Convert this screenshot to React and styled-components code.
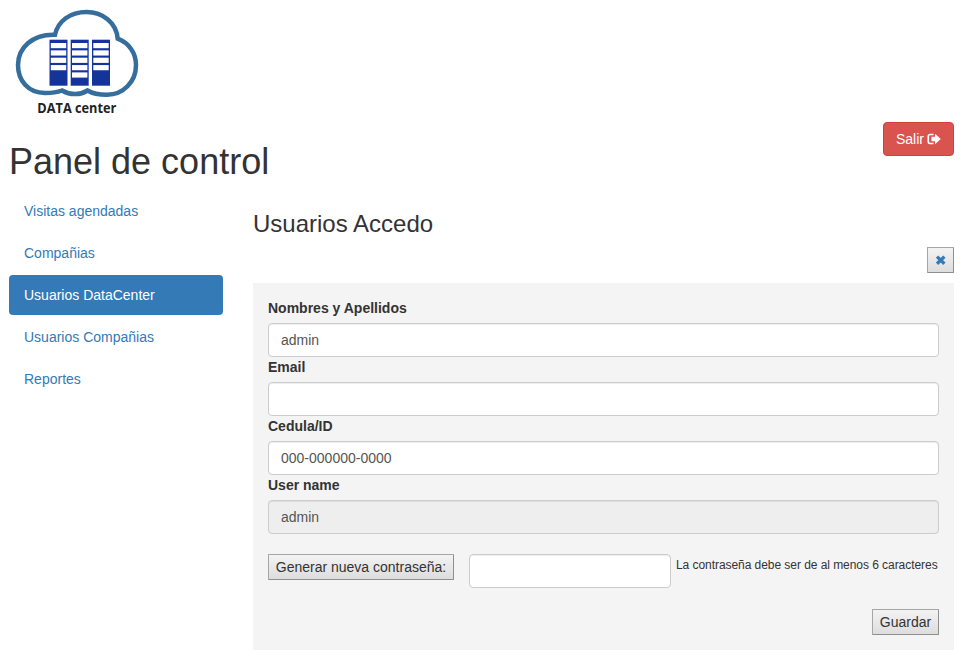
import React from "react";
import styled, { createGlobalStyle, css } from "styled-components";

const GlobalStyle = createGlobalStyle`
  *, *::before, *::after { box-sizing: border-box; }
  body {
    margin: 0;
    background: #fff;
    color: #333;
    font: 14px/20px "Liberation Sans", Arial, sans-serif;
  }
`;

const Page = styled.div`
  height: 662px;
  padding: 0 20px 0 9px;
  overflow: hidden;
`;

const Header = styled.header`
  display: flex;
  justify-content: space-between;
  align-items: flex-end;
  height: 191px;
`;

const Brand = styled.div`
  display: flex;
  flex-direction: column;
  height: 191px;
`;

const LogoArt = styled.svg`
  display: block;
  width: 140px;
  height: 122px;
  flex: none;
`;

const LogoText = styled.text`
  font: 700 13.5px "Open Sans", "Noto Sans", sans-serif;
  fill: #222;
`;

const Title = styled.h1`
  margin: 20px 0 0;
  font-size: 36px;
  font-weight: 400;
  line-height: 39.6px;
  white-space: nowrap;
`;

const ExitButton = styled.button`
  display: flex;
  align-items: center;
  justify-content: center;
  gap: 3px;
  width: 71px;
  height: 34px;
  margin-bottom: 35px;
  padding: 0;
  border: 1px solid #d43f3a;
  border-radius: 4px;
  background: #d9534f;
  color: #fff;
  font: inherit;
`;

const Glyph = styled.svg`
  display: block;
  flex: none;
`;

const Columns = styled.div`
  display: grid;
  grid-template-columns: 214px 701px;
  column-gap: 30px;
`;

const Nav = styled.nav`
  display: flex;
  flex-direction: column;
  gap: 2px;
`;

const NavLink = styled.a`
  height: 40px;
  padding: 10px 15px;
  border-radius: 4px;
  color: ${(p) => (p.$active ? "#fff" : "#337ab7")};
  background: ${(p) => (p.$active ? "#337ab7" : "transparent")};
  text-decoration: none;
`;

const Main = styled.main`
  display: flex;
  flex-direction: column;
`;

const Subtitle = styled.h3`
  height: 26px;
  margin: 20px 0 10px;
  font-size: 24px;
  font-weight: 400;
  line-height: 26.4px;
`;

const PlainButton = styled.button`
  display: flex;
  align-items: center;
  justify-content: center;
  width: ${(p) => p.$width}px;
  height: 26px;
  padding: 0;
  border: 1px solid #a6a6a6;
  border-right-color: #8f8f8f;
  border-bottom-color: #8f8f8f;
  border-radius: 1px;
  background: linear-gradient(#f3f3f3, #dddddd);
  color: #333;
  font: inherit;
  white-space: nowrap;
  flex: none;
`;

const ActionRow = styled.div`
  display: flex;
  justify-content: flex-end;
`;

const FormPanel = styled.form`
  height: 367px;
  margin-top: 10px;
  padding: 15px;
  background: #f4f4f4;
`;

const Field = styled.div`
  display: flex;
  flex-direction: column;
  gap: 5px;
`;

const Label = styled.label`
  font-weight: 700;
  line-height: 20px;
`;

const Input = styled.input`
  display: block;
  width: ${(p) => (p.$width ? `${p.$width}px` : "100%")};
  height: 34px;
  padding: 6px 12px;
  border: 1px solid #ccc;
  border-radius: 4px;
  background: #fff;
  color: #555;
  font: inherit;
  outline: 0;
  box-shadow: inset 0 1px 1px rgba(0, 0, 0, 0.075);
  ${(p) =>
    p.readOnly &&
    css`
      background: #eee;
    `}
`;

const PasswordRow = styled.div`
  display: flex;
  align-items: flex-start;
  height: 34px;
  margin: 20px 0 21px;
`;

const PasswordBox = styled.div`
  margin: 0 5px 0 15px;
`;

const Hint = styled.small`
  padding-top: 1px;
  font-size: 12px;
  line-height: 20px;
  letter-spacing: -0.055px;
  white-space: nowrap;
`;

const RACKS = [
  { x: 49.5, slots: 4 },
  { x: 70.7, slots: 5 },
  { x: 92, slots: 4 },
];

function Logo() {
  return (
    <LogoArt viewBox="9 0 140 122" role="img" aria-label="DATA center">
      <path
        d="M55 34.700C58 21 70 12 86.500 12c16.500 0 30 11 31.200 26.700C129 43 136 53 136 65c0 17-13 29.800-29 29.800-8 0-14-1-19.500-4.300-7 4.500-17 5-25.500 0-4 1.500-9 2.500-17 2.500C28 93 18 80.500 18 65c0-17 14-31 37-30.300Z"
        fill="none"
        stroke="#356d9d"
        strokeWidth="4.500"
      />
      {RACKS.map(({ x, slots }) => (
        <g key={x}>
          <rect x={x} y="39.700" width="18" height="46" fill="#15349a" />
          {Array.from({ length: slots }, (_, i) => (
            <rect key={i} x={x + 1.3} y={43 + i * 7.35} width="15.400" height="5.200" fill="#fff" />
          ))}
        </g>
      ))}
      <LogoText x="37.300" y="112.600" textLength="79" lengthAdjust="spacingAndGlyphs">
        DATA center
      </LogoText>
    </LogoArt>
  );
}

function ExitIcon() {
  return (
    <Glyph width="14" height="14" viewBox="0 0 14 14">
      <path d="M6.500 2.500H3Q1.300 2.500 1.300 4.200v5.600q0 1.700 1.700 1.700h3.500" fill="none" stroke="#fff" strokeWidth="1.600" />
      <path d="M8 1.700v3H4.500v4.600H8v3L13.800 7Z" fill="#fff" />
    </Glyph>
  );
}

function CloseIcon() {
  return (
    <Glyph width="12" height="12" viewBox="0 0 12 12">
      <path d="M2 2.600 9.400 9.800M9.400 2.600 2 9.800" stroke="#337ab7" strokeWidth="3.300" />
    </Glyph>
  );
}

const LINKS = ["Visitas agendadas", "Compañias", "Usuarios DataCenter", "Usuarios Compañias", "Reportes"];

const FIELDS = [
  { id: "nombre", label: "Nombres y Apellidos", value: "admin" },
  { id: "email", label: "Email", value: "" },
  { id: "cedula", label: "Cedula/ID", value: "000-000000-0000" },
  { id: "usuario", label: "User name", value: "admin", readOnly: true },
];

export default function App() {
  return (
    <>
      <GlobalStyle />
      <Page>
        <Header>
          <Brand>
            <Logo />
            <Title>Panel de control</Title>
          </Brand>
          <ExitButton type="button">
            Salir
            <ExitIcon />
          </ExitButton>
        </Header>
        <Columns>
          <Nav>
            {LINKS.map((text) => (
              <NavLink key={text} href="#" $active={text === "Usuarios DataCenter"}>
                {text}
              </NavLink>
            ))}
          </Nav>
          <Main>
            <Subtitle>Usuarios Accedo</Subtitle>
            <ActionRow>
              <PlainButton type="button" $width={27} aria-label="Cerrar">
                <CloseIcon />
              </PlainButton>
            </ActionRow>
            <FormPanel>
              {FIELDS.map(({ id, label, value, readOnly }) => (
                <Field key={id}>
                  <Label htmlFor={id}>{label}</Label>
                  <Input id={id} defaultValue={value} readOnly={readOnly} />
                </Field>
              ))}
              <PasswordRow>
                <PlainButton type="button" $width={186}>
                  Generar nueva contraseña:
                </PlainButton>
                <PasswordBox>
                  <Input $width={202} aria-label="Contraseña" />
                </PasswordBox>
                <Hint>La contraseña debe ser de al menos 6 caracteres</Hint>
              </PasswordRow>
              <ActionRow>
                <PlainButton type="button" $width={67}>
                  Guardar
                </PlainButton>
              </ActionRow>
            </FormPanel>
          </Main>
        </Columns>
      </Page>
    </>
  );
}
